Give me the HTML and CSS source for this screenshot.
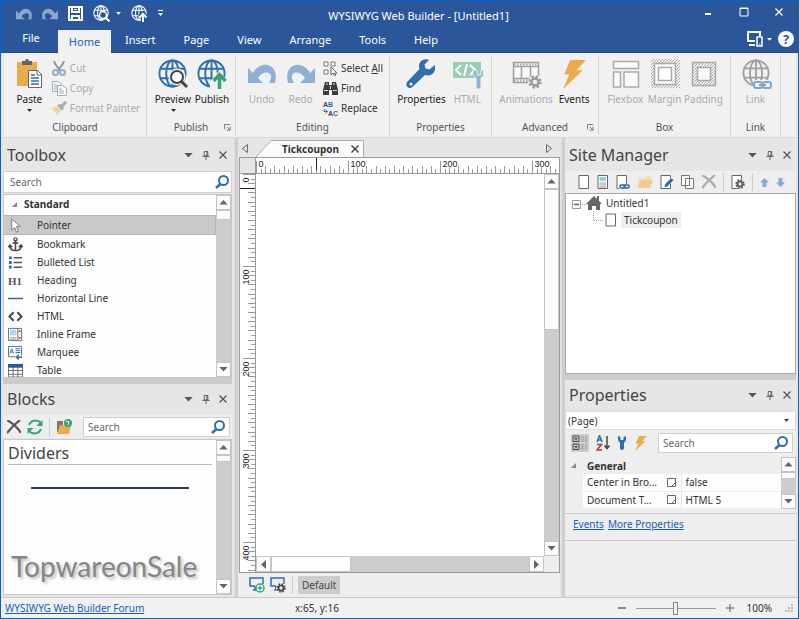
FILE: index.html
```html
<!DOCTYPE html>
<html lang="en">
<head>
    <meta charset="UTF-8">
    <meta name="viewport" content="width=device-width, initial-scale=1.0">
    <title>WYSIWYG Web Builder</title>
    <link rel="stylesheet" href="styles.css">
</head>
<body>
    <svg class="defs" aria-hidden="true">
        <pattern id="hatch" width="3" height="3" patternUnits="userSpaceOnUse">
            <path d="M0 3L3 0" stroke="#aaa"/>
        </pattern>
        <symbol id="globe" viewBox="0 0 30 30">
            <g fill="none" stroke="currentColor" stroke-width="2">
                <circle cx="15" cy="15" r="13.5"/>
                <ellipse cx="15" cy="15" rx="6.5" ry="13.5"/>
                <path d="M15 1v28M2 10h26M2 20h26"/>
            </g>
        </symbol>
        <symbol id="undo" viewBox="0 0 28 20">
            <path fill="currentColor" d="M0 4v15h15l-5-5c3-5 9-7 12-4 2 2 1 6-1 9h6c2-8 0-15-5-17-6-3-13 0-17 7z"/>
        </symbol>
        <symbol id="search" viewBox="0 0 14 14">
            <circle cx="8.5" cy="5.5" r="4.500" fill="none" stroke="#2f6fb0" stroke-width="2"/>
            <path d="M5.500 9L1 13" stroke="#2f6fb0" stroke-width="2.500"/>
        </symbol>
        <symbol id="pin" viewBox="0 0 8 10">
            <path d="M2 .5h4v5H2zM5 .5v5M0 6h8M4 6v4" fill="none" stroke="#555"/>
        </symbol>
        <symbol id="cross" viewBox="0 0 8 8">
            <path d="M.5.5l7 7M7.500.5l-7 7" stroke="currentColor" stroke-width="1.300"/>
        </symbol>
        <symbol id="bigcross" viewBox="0 0 14 14">
            <path d="M0 0c5 3 11 8 14 13M13 0C8 4 4 8 0 13" fill="none" stroke="currentColor" stroke-width="2.200"/>
        </symbol>
        <symbol id="down" viewBox="0 0 10 6"><path d="M0 0h10L5 5.500z" fill="currentColor"/></symbol>
        <symbol id="up" viewBox="0 0 10 6"><path d="M0 5.500h10L5 0z" fill="currentColor"/></symbol>
        <symbol id="launcher" viewBox="0 0 8 8">
            <path d="M.5 6V.5H7M3 3l3.500 3.500M7 3v4H3" fill="none" stroke="#666"/>
        </symbol>
        <symbol id="gear" viewBox="0 0 12 12">
            <circle cx="6" cy="6" r="4.700" fill="none" stroke="currentColor" stroke-width="2" stroke-dasharray="2 1.700"/>
            <circle cx="6" cy="6" r="3" fill="none" stroke="currentColor" stroke-width="2"/>
        </symbol>
        <symbol id="wrench" viewBox="0 0 30 30">
            <path fill="currentColor" d="M28.500 6l-5 4.500-4-1-1-4L23 1c-4-2-10 1-10 6 0 1 .3 2 .5 3L2 22c-2 2-2 4-1 5.500 2 2 4 2 6 0L19 16c6 2 12-3 9.500-10z"/>
            <circle cx="5" cy="25" r="1.500" fill="#f1f1f1"/>
        </symbol>
        <symbol id="bolt" viewBox="0 0 24 28">
            <path fill="#eaab4b" d="M8 0h15l-9 10h6L1 28l6-14H2z"/>
        </symbol>
        <symbol id="page" viewBox="0 0 12 14">
            <path d="M1 .5h9.500v13H1z" fill="#fff" stroke="#666"/>
        </symbol>
        <symbol id="monitor" viewBox="0 0 16 15">
            <path d="M6 9H1V1h13v6" fill="none" stroke="#2f6fb0" stroke-width="1.500"/>
            <path d="M4 13h4M6 9v4" stroke="#2f6fb0" stroke-width="1.500"/>
        </symbol>
    </svg>

    <div class="window">
        <header class="titlebar">
            <div class="quick">
                <button class="icon-btn dim" aria-label="Undo"><svg width="16" height="12"><use href="#undo"/></svg></button>
                <button class="icon-btn dim flip" aria-label="Redo"><svg width="16" height="12"><use href="#undo"/></svg></button>
                <button class="icon-btn" aria-label="Save">
                    <svg width="15" height="15" viewBox="0 0 15 15" fill="none" stroke="#fff" stroke-width="2"><path d="M1 1h13v13H1zM4 1v5h7V1M4 14v-4h7v4"/><path d="M6 3.500h3" stroke-width="1"/></svg>
                </button>
                <button class="icon-btn" aria-label="Preview">
                    <svg width="17" height="17" viewBox="0 0 17 17"><use href="#globe" width="16" height="16"/><circle cx="10" cy="10" r="3.500" fill="#2b579a" stroke="#fff" stroke-width="1.500"/><path d="M12.500 12.500l4 4" stroke="#fff" stroke-width="2"/></svg>
                    <svg class="caret" width="5" height="3"><use href="#down"/></svg>
                </button>
                <button class="icon-btn" aria-label="Publish">
                    <svg width="17" height="17" viewBox="0 0 17 17"><use href="#globe" width="16" height="16"/><path d="M12 17V8M8.500 12L12 8.500l3.500 3.500" fill="none" stroke="#2b579a" stroke-width="4"/><path d="M12 17V9M8.500 12.500L12 9l3.500 3.500" fill="none" stroke="#fff" stroke-width="2"/></svg>
                </button>
                <button class="icon-btn" aria-label="Customize">
                    <svg width="5" height="7" viewBox="0 0 5 7"><path d="M0 .5h5" stroke="#fff"/><path d="M0 3h5L2.500 6z" fill="#fff"/></svg>
                </button>
            </div>
            <h1 class="title">WYSIWYG Web Builder - [Untitled1]</h1>
            <div class="window-btns">
                <button class="icon-btn" aria-label="Minimize"><svg width="10" height="10"><path d="M2 7h6" stroke="#fff" stroke-width="2"/></svg></button>
                <button class="icon-btn" aria-label="Maximize"><svg width="10" height="10"><path d="M1 1h8v8H1zM1 1.500h8" fill="none" stroke="#fff"/></svg></button>
                <button class="icon-btn" aria-label="Close"><svg width="8" height="8"><use href="#cross"/></svg></button>
            </div>
        </header>

        <nav class="tabs">
            <button class="tab file">File</button>
            <button class="tab active">Home</button>
            <button class="tab">Insert</button>
            <button class="tab">Page</button>
            <button class="tab">View</button>
            <button class="tab">Arrange</button>
            <button class="tab">Tools</button>
            <button class="tab">Help</button>
            <div class="tabs-right">
                <button class="icon-btn" aria-label="Devices">
                    <svg width="17" height="16" viewBox="0 0 17 16"><path d="M8 10H1V1h12v4M2 14h6" fill="none" stroke="#fff" stroke-width="2"/><path d="M10 6h5v9h-5z" fill="#2b579a" stroke="#fff" stroke-width="1.500"/><path d="M12 13h1.500" stroke="#fff"/></svg>
                    <svg class="caret" width="5" height="3"><use href="#down"/></svg>
                </button>
                <button class="help" aria-label="Help">?</button>
            </div>
        </nav>

        <div class="ribbon">
            <section class="group clipboard">
                <div class="tools">
                    <button class="big">
                        <svg class="ico" viewBox="0 0 32 32"><path d="M4 4h20v24H4z" fill="#eaab4b"/><path d="M9 7V3h3a2 2 0 0 1 4 0h3v4z" fill="#666"/><path d="M15.500 12.500h9l4 4v13h-13z" fill="#fff" stroke="#666"/><path d="M24 12v5h5" fill="none" stroke="#666"/><path d="M18 17h4M18 20h8M18 23h8M18 26h8" stroke="#2b6cb0" stroke-width="1.500"/></svg>
                        Paste
                        <svg class="caret" width="5" height="3"><use href="#down"/></svg>
                    </button>
                    <div class="stack">
                        <button class="small" disabled><svg width="15" height="15" viewBox="0 0 15 15"><path d="M2 0c1 4 4 7 7 10M12 0c-1 4-4 7-7 10" fill="none" stroke="#999" stroke-width="2"/><circle cx="3.500" cy="11.500" r="2.500" fill="none" stroke="#8fb0d2" stroke-width="2"/><circle cx="10.500" cy="11.500" r="2.500" fill="none" stroke="#8fb0d2" stroke-width="2"/></svg>Cut</button>
                        <button class="small" disabled><svg width="15" height="15" viewBox="0 0 15 15"><path d="M.5.5h6l3 3v7h-9z" fill="#f8f8f8" stroke="#aaa"/><path d="M2 4h3M2 6h3M2 8h3" stroke="#8fb0d2"/><path d="M5.500 4.500h5l4 3v7h-9z" fill="#fff" stroke="#aaa"/><path d="M7 8h3M7 10h5M7 12h5" stroke="#8fb0d2"/></svg>Copy</button>
                        <button class="small" disabled><svg width="15" height="15" viewBox="0 0 15 15"><path d="M0 7l5-2 4 5-4 4z" fill="#f0d3a4"/><path d="M5 4l5 6 2-3-3-4z" fill="#aaa"/><path d="M9 6l5-5" stroke="#aaa" stroke-width="3"/></svg>Format Painter</button>
                    </div>
                </div>
                <h2 class="group-name">Clipboard</h2>
            </section>
            <section class="group publish">
                <div class="tools">
                    <button class="big">
                        <svg class="ico" viewBox="0 0 32 32"><g color="#2f6fb0"><use href="#globe" x="1" y="1" width="29" height="29"/></g><circle cx="20" cy="19" r="6" fill="#fff" stroke="#f1f1f1" stroke-width="5"/><circle cx="20" cy="19" r="6" fill="#fff" stroke="#444" stroke-width="2"/><path d="M24 23l6 6" stroke="#444" stroke-width="3"/></svg>
                        Preview
                        <svg class="caret" width="5" height="3"><use href="#down"/></svg>
                    </button>
                    <button class="big">
                        <svg class="ico" viewBox="0 0 32 32"><g color="#2f6fb0"><use href="#globe" x="1" y="1" width="29" height="29"/></g><path d="M14 23l9-10 9 10v9H14z" fill="#f1f1f1"/><path d="M23.500 31V18M17.500 23l6-6.500 6 6.500" fill="none" stroke="#37a376" stroke-width="3.500"/></svg>
                        Publish
                    </button>
                </div>
                <h2 class="group-name">Publish</h2>
                <button class="launch" aria-label="Publish options"><svg width="7" height="7"><use href="#launcher"/></svg></button>
            </section>
            <section class="group editing">
                <div class="tools">
                    <button class="big" disabled><svg class="ico undo" viewBox="0 0 32 32"><use href="#undo" x="2" y="6" width="28" height="20"/></svg>Undo</button>
                    <button class="big" disabled><svg class="ico undo flip" viewBox="0 0 32 32"><use href="#undo" x="2" y="6" width="28" height="20"/></svg>Redo</button>
                    <div class="stack">
                        <button class="small"><svg width="15" height="15" viewBox="0 0 15 15"><path d="M1 1h4v4H1zM8 1h4v4H8zM1 9h4v4H1z" fill="#fff" stroke="#777"/><path d="M8 6v8l2-2 1.500 3 1.500-1-1.500-2H14z" fill="#fff" stroke="#666"/></svg><span>Select <u>A</u>ll</span></button>
                        <button class="small"><svg width="15" height="15" viewBox="0 0 15 15"><path d="M2 1h4v3h3V1h4l2 8v5H9V9H6v5H0V9z" fill="#3c3c3c"/><path d="M1 9.500h4M10 9.500h4M3 3h2M10 3h2M7.500 5v3" stroke="#ddd"/></svg>Find</button>
                        <button class="small"><svg class="ab" width="15" height="15" viewBox="0 0 15 15"><text x="0" y="6" fill="#444">A<tspan fill="#2b6cb0">B</tspan></text><text x="5" y="15" fill="#444">A<tspan fill="#2b6cb0">C</tspan></text><path d="M1 8v2.500h3M2.500 8.500l2 2-2 2" fill="none" stroke="#2b6cb0"/></svg>Replace</button>
                    </div>
                </div>
                <h2 class="group-name">Editing</h2>
            </section>
            <section class="group props">
                <div class="tools">
                    <button class="big"><svg class="ico" viewBox="0 0 32 32"><g color="#2f6fb0"><use href="#wrench" x="1" y="1" width="30" height="30"/></g></svg>Properties</button>
                    <button class="big" disabled><svg class="ico" viewBox="0 0 32 32"><path d="M2 4h28v16H2z" fill="#9bccb5"/><path d="M10 7l-5 5 5 5M19 7l5 5-5 5M16 6l-3 12" fill="none" stroke="#fff" stroke-width="2"/><path d="M22 12v5l3 3v8c0 4 5 4 5 0v-8l3-3v-5h-3v5h-4v-5z" fill="#94b1d4" stroke="#f1f1f1"/></svg>HTML</button>
                </div>
                <h2 class="group-name">Properties</h2>
            </section>
            <section class="group advanced">
                <div class="tools">
                    <button class="big" disabled><svg class="ico" viewBox="0 0 32 32"><path d="M3.500 4.500h25v20h-25zM3 8.500h26M3 20.500h26M11.500 8v12M20.500 8v12" fill="#fafafa" stroke="#a0a0a0" stroke-width="1.500"/><path d="M4 6.500h24M4 22.500h24" stroke="#a0a0a0" stroke-width="2" stroke-dasharray="1.500 1.500"/><circle cx="25" cy="24" r="7" fill="#f1f1f1"/><g color="#999"><use href="#gear" x="18" y="17" width="14" height="14"/></g></svg>Animations</button>
                    <button class="big"><svg class="ico" viewBox="0 0 32 32"><use href="#bolt" x="4" y="2" width="25" height="29"/></svg>Events</button>
                </div>
                <h2 class="group-name">Advanced</h2>
                <button class="launch" aria-label="Advanced options"><svg width="7" height="7"><use href="#launcher"/></svg></button>
            </section>
            <section class="group box">
                <div class="tools">
                    <button class="big" disabled><svg class="ico" viewBox="0 0 32 32"><path d="M3.500 3.500h25v7h-25zM3.500 14h7v15h-7zM14 14h14.500v15H14z" fill="#fafafa" stroke="#aaa" stroke-width="1.500"/></svg>Flexbox</button>
                    <button class="big" disabled><svg class="ico" viewBox="0 0 32 32"><path d="M2 1h29v29H2z" fill="url(#hatch)"/><path d="M5.500 5.500h21v21h-21z" fill="#fafafa" stroke="#aaa" stroke-width="1.500"/><path d="M9.500 9.500h13v13h-13z" fill="#fff" stroke="#aaa" stroke-width="1.500"/></svg>Margin</button>
                    <button class="big" disabled><svg class="ico" viewBox="0 0 32 32"><path d="M4.500 4.500h23v23h-23z" fill="url(#hatch)" stroke="#aaa" stroke-width="1.500"/><path d="M9.500 9.500h13v13h-13z" fill="#fafafa" stroke="#aaa" stroke-width="1.500"/></svg>Padding</button>
                </div>
                <h2 class="group-name">Box</h2>
            </section>
            <section class="group link">
                <div class="tools">
                    <button class="big" disabled><svg class="ico" viewBox="0 0 32 32"><g color="#a0a0a0"><use href="#globe" x="2" y="1" width="28" height="28"/></g><path d="M13 22h19v9H13z" fill="#f1f1f1"/><rect x="14" y="24" width="8" height="6" rx="2" fill="none" stroke="#7ea6d2" stroke-width="2"/><rect x="23" y="24" width="8" height="6" rx="2" fill="none" stroke="#7ea6d2" stroke-width="2"/><path d="M19 27h7" stroke="#7ea6d2" stroke-width="2"/></svg>Link</button>
                </div>
                <h2 class="group-name">Link</h2>
            </section>
        </div>

        <main class="work">
            <aside class="side">
                <section class="panel toolbox">
                    <div class="panel-head">
                        <h2>Toolbox</h2>
                        <button class="icon-btn" aria-label="Toolbox menu"><svg width="9" height="5"><use href="#down"/></svg></button>
                        <button class="icon-btn" aria-label="Pin toolbox"><svg width="8" height="9"><use href="#pin"/></svg></button>
                        <button class="icon-btn" aria-label="Close toolbox"><svg width="8" height="8"><use href="#cross"/></svg></button>
                    </div>
                    <label class="search wide">
                        <input type="text" placeholder="Search" aria-label="Search toolbox">
                        <svg width="14" height="14"><use href="#search"/></svg>
                    </label>
                    <div class="list">
                        <div class="list-main">
                            <h3 class="cat"><svg width="5" height="5"><path d="M5 0v5H0z" fill="#888"/></svg>Standard</h3>
                            <ul class="items">
                                <li class="selected"><svg viewBox="0 0 16 16"><path d="M4 1v12l3-3 2 5 2-1-2-5h4z" fill="#fff" stroke="#777"/></svg>Pointer</li>
                                <li><svg viewBox="0 0 16 16"><path d="M8 4v11M5 6.500h6M2 9c0 4 3 5.500 6 5.500S14 13 14 9M0.500 11L2 8.500 4.500 11M11.500 11L14 8.500l1.500 2.500" fill="none" stroke="#444" stroke-width="1.600"/><circle cx="8" cy="2.500" r="1.700" fill="none" stroke="#444" stroke-width="1.300"/></svg>Bookmark</li>
                                <li><svg viewBox="0 0 16 16"><path d="M6 3h9M6 8h9M6 13h9" stroke="#555" stroke-width="1.500"/><path d="M1 3h3M1 8h3M1 13h3" stroke="#2b6cb0" stroke-width="3"/></svg>Bulleted List</li>
                                <li><span class="h1-ico">H1</span>Heading</li>
                                <li><svg viewBox="0 0 16 16"><path d="M0 8h16" stroke="#2f5f9f" stroke-width="1.500"/></svg>Horizontal Line</li>
                                <li><svg viewBox="0 0 16 16"><path d="M6 3.500L1.500 8 6 12.500M10 3.500L14.500 8 10 12.500" fill="none" stroke="#444" stroke-width="2"/></svg>HTML</li>
                                <li><svg viewBox="0 0 16 16"><path d="M.5 1.500h14v13H.5zM10.500 1v14" fill="#fff" stroke="#666"/><path d="M2 3h7v6H2z" fill="#a9d8f5"/><path d="M2 11.500h7M2 13h7" stroke="#999"/><path d="M11 5h3l-1.500-2zM11 11h3l-1.500 2z" fill="#555"/></svg>Inline Frame</li>
                                <li><svg viewBox="0 0 16 16"><path d="M.5 1.500h14v11H.5z" fill="#fff" stroke="#666"/><path d="M2 9l2-5 2 5M3 7.500h2M8 4h5M8 6h5M8 8h5" fill="none" stroke="#2b6cb0"/><path d="M8 11h8v5H8z" fill="#fff"/><path d="M9 13h6M11.500 10.500L9 13l2.500 2.500" fill="none" stroke="#2b6cb0" stroke-width="1.500"/></svg>Marquee</li>
                                <li><svg viewBox="0 0 16 16"><path d="M.5 2h15v13H.5zM.5 8h15M.5 12h15M5.500 3v12M10.500 3v12" fill="#fff" stroke="#666"/><path d="M0 1h16v4H0z" fill="#2b579a"/></svg>Table</li>
                            </ul>
                        </div>
                        <div class="scroll">
                            <button aria-label="Scroll up"><svg width="9" height="5"><use href="#up"/></svg></button>
                            <span class="thumb short"></span>
                            <button class="end" aria-label="Scroll down"><svg width="9" height="5"><use href="#down"/></svg></button>
                        </div>
                    </div>
                </section>
                <div class="hsplit"></div>
                <section class="panel blocks">
                    <div class="panel-head">
                        <h2>Blocks</h2>
                        <button class="icon-btn" aria-label="Blocks menu"><svg width="9" height="5"><use href="#down"/></svg></button>
                        <button class="icon-btn" aria-label="Pin blocks"><svg width="8" height="9"><use href="#pin"/></svg></button>
                        <button class="icon-btn" aria-label="Close blocks"><svg width="8" height="8"><use href="#cross"/></svg></button>
                    </div>
                    <div class="toolbar">
                        <button class="icon-btn" aria-label="Delete block"><svg width="14" height="14"><use href="#bigcross"/></svg></button>
                        <button class="icon-btn" aria-label="Refresh"><svg width="16" height="16" viewBox="0 0 16 16"><path d="M2 6c2-5 8-6 12-2M14 10c-2 5-8 6-12 2" fill="none" stroke="#37a376" stroke-width="2"/><path d="M15.500 1v6h-6zM.5 15V9h6z" fill="#37a376"/></svg></button>
                        <span class="bar"></span>
                        <button class="icon-btn" aria-label="Block folder"><svg width="16" height="16" viewBox="0 0 16 16"><path d="M1 2h6v11H1z" fill="#777"/><path d="M4 6h11l-2 9H1z" fill="#eaab4b"/><circle cx="12" cy="4" r="4" fill="#37a376"/><path d="M10 2l3 1-1 3" fill="none" stroke="#fff"/></svg></button>
                        <label class="search">
                            <input type="text" placeholder="Search" aria-label="Search blocks">
                            <svg width="14" height="14"><use href="#search"/></svg>
                        </label>
                    </div>
                    <div class="list">
                        <div class="list-main">
                            <h3 class="dividers">Dividers</h3>
                            <hr class="rule">
                            <p class="brand">TopwareonSale</p>
                        </div>
                        <div class="scroll">
                            <button aria-label="Scroll up"><svg width="9" height="5"><use href="#up"/></svg></button>
                            <span class="thumb tiny"></span>
                            <button class="end" aria-label="Scroll down"><svg width="9" height="5"><use href="#down"/></svg></button>
                        </div>
                    </div>
                </section>
            </aside>

            <div class="vsplit"></div>

            <section class="editor">
                <div class="doc-tabs">
                    <button class="icon-btn" aria-label="Previous tab"><svg width="6" height="9" viewBox="0 0 6 9"><path d="M5.500.5v8L.5 4.500z" fill="none" stroke="#666"/></svg></button>
                    <div class="doc-tab">
                        <svg class="slope" width="15" height="17" viewBox="0 0 15 17"><path d="M0 17L15 0v17z" fill="#fcfcfc"/><path d="M0 17L15 .5" stroke="#aaa"/></svg>
                        <span class="doc-name">Tickcoupon</span>
                        <button class="icon-btn" aria-label="Close Tickcoupon"><svg width="8" height="8"><use href="#cross"/></svg></button>
                    </div>
                    <button class="icon-btn last" aria-label="Next tab"><svg width="6" height="9" viewBox="0 0 6 9"><path d="M.5.5v8l5-4z" fill="none" stroke="#666"/></svg></button>
                </div>
                <div class="canvas">
                    <div class="corner"></div>
                    <svg class="ruler-x" id="rulerX"></svg>
                    <svg class="ruler-y" id="rulerY"></svg>
                    <div class="sheet"></div>
                    <div class="scroll sv">
                        <button aria-label="Scroll up"><svg width="9" height="5"><use href="#up"/></svg></button>
                        <span class="thumb half"></span>
                        <button class="end" aria-label="Scroll down"><svg width="9" height="5"><use href="#down"/></svg></button>
                    </div>
                    <div class="scroll sh">
                        <button aria-label="Scroll left"><svg width="5" height="9" viewBox="0 0 5 9"><path d="M5 0v9L0 4.500z" fill="#666"/></svg></button>
                        <span class="thumb"></span>
                        <button class="end" aria-label="Scroll right"><svg width="5" height="9" viewBox="0 0 5 9"><path d="M0 0v9l5-4.500z" fill="#666"/></svg></button>
                    </div>
                    <div class="grip"></div>
                </div>
                <div class="breakpoints">
                    <button class="icon-btn" aria-label="Add breakpoint"><svg width="16" height="16" viewBox="0 0 16 16"><use href="#monitor" width="16" height="15"/><circle cx="11" cy="11" r="4" fill="#fff" stroke="#37a376" stroke-width="1.500"/><path d="M8.500 11h5M11 8.500v5" stroke="#37a376" stroke-width="1.500"/></svg></button>
                    <button class="icon-btn" aria-label="Manage breakpoints"><svg width="16" height="16" viewBox="0 0 16 16"><use href="#monitor" width="16" height="15"/><circle cx="11" cy="11" r="5" fill="#eee"/><use href="#gear" x="6" y="6" width="10" height="10"/></svg></button>
                    <span class="bar"></span>
                    <button class="default">Default</button>
                </div>
            </section>

            <div class="vsplit"></div>

            <aside class="side right">
                <section class="panel site">
                    <div class="panel-head">
                        <h2>Site Manager</h2>
                        <button class="icon-btn" aria-label="Site manager menu"><svg width="9" height="5"><use href="#down"/></svg></button>
                        <button class="icon-btn" aria-label="Pin site manager"><svg width="8" height="9"><use href="#pin"/></svg></button>
                        <button class="icon-btn" aria-label="Close site manager"><svg width="8" height="8"><use href="#cross"/></svg></button>
                    </div>
                    <div class="toolbar site-tools">
                        <button class="icon-btn" aria-label="New page"><svg width="12" height="14"><use href="#page"/></svg></button>
                        <button class="icon-btn" aria-label="Page from template"><svg width="12" height="14" viewBox="0 0 12 14"><use href="#page"/><path d="M2.500 2h6.500v4H2.500z" fill="#8fcdf2"/><path d="M2.500 8h6.500M2.500 10h6.500M2.500 12h6.500" stroke="#999"/></svg></button>
                        <button class="icon-btn" aria-label="Linked page"><svg width="14" height="14" viewBox="0 0 14 14"><use href="#page" width="12" height="14"/><path d="M3 9h11v5H3z" fill="#eee"/><rect x="4" y="10" width="5" height="3" rx="1" fill="none" stroke="#2b6cb0" stroke-width="1.500"/><rect x="8" y="10" width="5" height="3" rx="1" fill="none" stroke="#2b6cb0" stroke-width="1.500"/></svg></button>
                        <button class="icon-btn" aria-label="New folder"><svg width="16" height="14" viewBox="0 0 16 14"><path d="M1 12V3h7l1-2h5v4" fill="#f3dcb8"/><path d="M4 5h12l-3 8H0z" fill="#efcb92"/></svg></button>
                        <button class="icon-btn" aria-label="Page properties"><svg width="14" height="14" viewBox="0 0 14 14"><use href="#page" width="12" height="14"/><path d="M4 12l1-3 6-6 3 2-7 7z" fill="#2b6cb0" stroke="#eee" stroke-width=".6"/></svg></button>
                        <button class="icon-btn" aria-label="Clone page"><svg width="14" height="14" viewBox="0 0 14 14"><path d="M.5.5h8v10h-8zM4.500 3.500h8v10h-8z" fill="#fff" stroke="#777"/></svg></button>
                        <button class="icon-btn pale" aria-label="Delete page"><svg width="14" height="14"><use href="#bigcross"/></svg></button>
                        <span class="bar"></span>
                        <button class="icon-btn" aria-label="Page settings"><svg width="14" height="14" viewBox="0 0 14 14"><use href="#page" width="12" height="14"/><circle cx="9" cy="9" r="5" fill="#eee"/><use href="#gear" x="4" y="4" width="10" height="10"/></svg></button>
                        <span class="bar"></span>
                        <button class="icon-btn" aria-label="Move up"><svg width="9" height="9" viewBox="0 0 9 9"><path d="M0 4.500L4.500 0 9 4.500H6.500V9h-4V4.500z" fill="#84a9d4"/></svg></button>
                        <button class="icon-btn" aria-label="Move down"><svg width="9" height="9" viewBox="0 0 9 9"><path d="M0 4.500L4.500 9 9 4.500H6.500V0h-4v4.500z" fill="#84a9d4"/></svg></button>
                    </div>
                    <ul class="tree">
                        <li>
                            <svg width="30" height="16" viewBox="0 0 30 16"><path d="M.5 5.500h8v8h-8z" fill="#fff" stroke="#999"/><path d="M2 9.500h5" stroke="#2b6cb0" stroke-width="1.500"/><path d="M10 9.500h5" stroke="#999" stroke-dasharray="1 1"/><path d="M14 9l8-8 3 3V1h2v5l3 3h-2v6h-4v-4h-4v4h-4V9z" fill="#666"/></svg>
                            <span>Untitled1</span>
                        </li>
                        <li class="child">
                            <svg width="25" height="18" viewBox="0 0 25 18"><path d="M1.500 0v9.500H12" fill="none" stroke="#999" stroke-dasharray="1 1"/><path d="M14 3h9.500v12H14z" fill="#fff" stroke="#666"/></svg>
                            <span class="node">Tickcoupon</span>
                        </li>
                    </ul>
                </section>
                <div class="hsplit"></div>
                <section class="panel properties">
                    <div class="panel-head">
                        <h2>Properties</h2>
                        <button class="icon-btn" aria-label="Properties menu"><svg width="9" height="5"><use href="#down"/></svg></button>
                        <button class="icon-btn" aria-label="Pin properties"><svg width="8" height="9"><use href="#pin"/></svg></button>
                        <button class="icon-btn" aria-label="Close properties"><svg width="8" height="8"><use href="#cross"/></svg></button>
                    </div>
                    <div class="select">
                        <select aria-label="Object"><option>(Page)</option></select>
                        <svg width="5" height="3"><use href="#down"/></svg>
                    </div>
                    <div class="toolbar prop-tools">
                        <button class="icon-btn on" aria-label="Categorized"><svg width="16" height="16" viewBox="0 0 16 16"><path d="M1 1h6v5.500H1zM1 9h6v5.500H1zM2.500 3.800h3M4 2.300v3M2.500 11.800h3M4 10.300v3" fill="none" stroke="#444"/><path d="M9 2h6M9 4h6M9 6h6M9 10h6M9 12h6M9 14h6" stroke="#999" stroke-dasharray="3 1"/></svg></button>
                        <button class="icon-btn" aria-label="Sort A to Z"><svg width="14" height="16" viewBox="0 0 14 16"><path d="M1 7l2.500-6.500L6 7M2 5h3" fill="none" stroke="#2b6cb0" stroke-width="1.500"/><path d="M1 9.500h4.500L1 15h5" fill="none" stroke="#c0392b" stroke-width="1.500"/><path d="M11 1v12M8.500 10.500l2.500 3 2.500-3" fill="none" stroke="#444" stroke-width="1.500"/></svg></button>
                        <button class="icon-btn" aria-label="Property pages"><svg width="10" height="14" viewBox="0 0 10 14"><path d="M1 0v4l2 3v5c0 2.500 4 2.500 4 0V7l2-3V0L6.500 1v3h-3V1z" fill="#2f6fb0"/></svg></button>
                        <button class="icon-btn" aria-label="Events"><svg width="14" height="15"><use href="#bolt"/></svg></button>
                        <label class="search">
                            <input type="text" placeholder="Search" aria-label="Search properties">
                            <svg width="14" height="14"><use href="#search"/></svg>
                        </label>
                    </div>
                    <div class="grid-wrap">
                        <table class="props-table">
                            <thead>
                                <tr><td class="gutter"><svg width="5" height="5"><path d="M5 0v5H0z" fill="#888"/></svg></td><th colspan="3">General</th></tr>
                            </thead>
                            <tbody>
                                <tr><td class="gutter"></td><td>Center in Bro...</td><td class="flag"><svg width="9" height="9" viewBox="0 0 9 9"><path d="M.5.5h8v8h-8zM8 5L5 8" fill="none" stroke="#666"/></svg></td><td class="value">false</td></tr>
                                <tr><td class="gutter"></td><td>Document T...</td><td class="flag"><svg width="9" height="9" viewBox="0 0 9 9"><path d="M.5.5h8v8h-8zM8 5L5 8" fill="none" stroke="#666"/></svg></td><td class="value">HTML 5</td></tr>
                            </tbody>
                        </table>
                        <div class="scroll">
                            <button aria-label="Scroll up"><svg width="9" height="5"><use href="#up"/></svg></button>
                            <span class="thumb tiny"></span>
                            <button class="end" aria-label="Scroll down"><svg width="9" height="5"><use href="#down"/></svg></button>
                        </div>
                    </div>
                    <div class="prop-links"><a href="#">Events</a><a href="#">More Properties</a></div>
                </section>
            </aside>
        </main>

        <footer class="status">
            <a href="#">WYSIWYG Web Builder Forum</a>
            <span class="coords">x:65, y:16</span>
            <div class="zoom">
                <button class="icon-btn" aria-label="Zoom out"><svg width="8" height="8"><path d="M0 4h8" stroke="#888" stroke-width="2"/></svg></button>
                <input type="range" min="0" max="200" value="100" aria-label="Zoom">
                <button class="icon-btn" aria-label="Zoom in"><svg width="8" height="8"><path d="M0 4h8M4 0v8" stroke="#888" stroke-width="1.500"/></svg></button>
                <span class="percent">100%</span>
                <svg width="8" height="8" viewBox="0 0 8 8"><path d="M6 0h2v2H6zM3 3h2v2H3zM6 3h2v2H6zM0 6h2v2H0zM3 6h2v2H3zM6 6h2v2H6z" fill="#bbb"/></svg>
            </div>
        </footer>
    </div>

    <script>
        // 100 page units take 92px on the rulers
        const SCALE = 92 / 100;

        function drawRuler(svg, vertical, cursor) {
            let length = vertical ? svg.clientHeight : svg.clientWidth;
            let out = "";
            for (let i = 0; i * 5 * SCALE < length; i++) {
                let unit = i * 5;
                let pos = Math.round(unit * SCALE) + 0.5;
                let size = unit % 100 === 0 ? 12 : (i % 2 === 0 ? 7 : 4);
                let path = vertical ? `M15 ${pos}h-${size}` : `M${pos} 15v-${size}`;
                out += `<path d="${path}" class="tick"/>`;
                if (unit % 100 === 0) {
                    out += vertical
                        ? `<text transform="translate(9 ${pos + 3}) rotate(-90)" text-anchor="end">${unit}</text>`
                        : `<text x="${pos + 2}" y="9">${unit}</text>`;
                }
            }
            let mark = vertical ? `M0 ${cursor}h15` : `M${cursor} 0v12`;
            out += `<path d="${mark}" class="mark"/>`;
            svg.innerHTML = out;
        }

        function drawRulers() {
            drawRuler(document.getElementById("rulerX"), false, 60.5);
            drawRuler(document.getElementById("rulerY"), true, 14.5);
        }

        drawRulers();
        window.addEventListener("resize", drawRulers);
    </script>
</body>
</html>
```

FILE: styles.css
```css
* {
    box-sizing: border-box;
}
body {
    margin: 0;
    height: 100vh;
    padding: 0 1px 1px 0;
    background: #dcdcdc;
    font-family: "Noto Sans", "Open Sans", sans-serif;
    font-size: 10px;
    line-height: 16px;
    color: #333;
    overflow: hidden;
}
button, input, select {
    font: inherit;
    color: inherit;
}
button {
    display: flex;
    align-items: center;
    justify-content: center;
    margin: 0;
    padding: 0;
    border: 0;
    background: none;
    cursor: pointer;
}
h1, h2, h3, p, ul {
    margin: 0;
    padding: 0;
    font-size: inherit;
    font-weight: normal;
}
ul {
    list-style: none;
}
a {
    color: #1560bd;
}
svg {
    display: block;
    flex: none;
}
.defs {
    position: absolute;
    width: 0;
    height: 0;
}
.window {
    display: flex;
    flex-direction: column;
    height: 100%;
    border: 1px solid #0a62c9;
    background: #e6e6e6;
}

/* title bar and tabs */
.titlebar {
    display: grid;
    grid-template-columns: 1fr auto 1fr;
    align-items: center;
    height: 25px;
    padding: 0 15px;
    background: #2b579a;
    color: #fff;
}
.quick {
    display: flex;
    align-items: center;
    gap: 10px;
}
.quick .icon-btn {
    gap: 6px;
}
.dim {
    color: #8ba6cc;
}
.flip {
    transform: scaleX(-1);
}
.title {
    font-size: 11px;
    padding: 5px 0 0 38px;
}
.window-btns {
    display: flex;
    justify-content: flex-end;
    align-items: center;
    gap: 26px;
    padding-bottom: 4px;
}
.tabs {
    display: flex;
    height: 27px;
    padding-right: 4px;
    background: #2b579a;
    border-bottom: 1px solid #234a86;
    color: #fff;
    font-size: 11px;
}
.tab {
    padding: 1px 14px 0;
}
.tab.file {
    width: 56px;
    padding: 0 0 3px 4px;
}
.tab.active {
    align-self: flex-end;
    width: 53px;
    height: 23px;
    margin-bottom: -1px;
    margin-left: 1px;
    background: #f1f1f1;
    color: #1c62c4;
}
.tabs-right {
    display: flex;
    align-items: center;
    gap: 6px;
    margin-left: auto;
}
.tabs-right .icon-btn {
    gap: 3px;
}
.help {
    width: 16px;
    height: 16px;
    border-radius: 8px;
    background: #fff;
    color: #2b579a;
    font-size: 13px;
    font-weight: bold;
}

/* ribbon */
.ribbon {
    display: flex;
    height: 85px;
    margin: 0 2px 0 3px;
    padding: 3px 0 2px;
    background: #f1f1f1;
    border-bottom: 1px solid #d6d6d6;
}
.group {
    position: relative;
    display: flex;
    flex-direction: column;
    justify-content: space-between;
    align-items: center;
    border-right: 1px solid #d4d4d4;
}
.clipboard { flex: 0 0 143px; }
.publish { flex: 0 0 89px; }
.editing { flex: 0 0 154px; }
.props { flex: 0 0 102px; }
.advanced { flex: 0 0 107px; }
.box { flex: 0 0 132px; }
.link { flex: 0 0 50px; }
.tools {
    display: flex;
    justify-content: center;
    padding-top: 2px;
}
.publish .tools,
.props .tools,
.advanced .tools {
    padding-left: 3px;
}
.big {
    flex-direction: column;
    justify-content: flex-start;
    min-width: 39px;
    height: 59px;
    color: #222;
}
.props .big:first-child,
.advanced .big:first-child {
    margin-right: 2px;
}
.big .ico {
    width: 32px;
    height: 32px;
    margin-bottom: 1px;
}
.big .caret {
    margin-top: 2px;
}
.big .undo {
    color: #8fb0d2;
}
.big:disabled,
.small:disabled {
    color: #aaa;
}
.stack {
    display: flex;
    flex-direction: column;
    padding-left: 3px;
}
.small {
    justify-content: flex-start;
    gap: 3px;
    height: 20px;
    white-space: nowrap;
}
.ab {
    overflow: visible;
    font-family: "Liberation Sans", sans-serif;
    font-size: 7px;
    font-weight: bold;
}
.group-name {
    color: #555;
}
.launch {
    position: absolute;
    right: 4px;
    bottom: 4px;
}

/* work area */
.work {
    display: flex;
    flex: 1;
    min-height: 0;
}
.side {
    display: flex;
    flex-direction: column;
    flex: 0 0 233px;
    min-width: 0;
    padding: 2px;
}
.side.right {
    padding-left: 0;
}
.vsplit {
    flex: 0 0 4px;
    background: #cfcfcf;
    border-left: 1px solid #dedede;
}
.hsplit {
    flex: 0 0 6px;
    background: #ccc;
}
.panel {
    display: flex;
    flex-direction: column;
    min-height: 0;
}
.toolbox { flex: 1 1 238px; }
.blocks { flex: 1 1 211px; }
.site { flex: 1 1 234px; }
.properties { flex: 1 1 215px; }
.properties {
    background: #eee;
}
.panel-head {
    display: flex;
    align-items: center;
    gap: 9px;
    flex: 0 0 31px;
    padding: 0 5px 1px 4px;
    background: #e6e6e6;
    color: #555;
}
.panel-head h2 {
    margin-right: auto;
    font-size: 16px;
    line-height: 24px;
    color: #444;
}
.search {
    display: flex;
    align-items: center;
    flex: 1;
    min-width: 0;
    height: 20px;
    padding: 0 4px;
    background: #fff;
    border: 1px solid #d0d0d0;
}
.search.wide {
    flex: 0 0 22px;
    padding: 0 2px 0 6px;
}
.search input {
    flex: 1;
    width: 0;
    min-width: 0;
    padding: 0;
    border: 0;
    outline: 0;
    background: none;
}
.search input::placeholder {
    color: #666;
    opacity: 1;
}
.list {
    display: flex;
    flex: 1;
    min-height: 0;
    margin-top: 1px;
    background: #fdfdfd;
    border: 1px solid #c8c8c8;
}
.list-main {
    flex: 1;
    overflow: hidden;
}
.cat {
    display: flex;
    align-items: center;
    gap: 7px;
    height: 20px;
    padding: 0 0 2px 8px;
    font-weight: bold;
}
.items li {
    display: flex;
    align-items: center;
    gap: 14px;
    height: 18px;
    padding-left: 4px;
}
.items li svg,
.h1-ico {
    width: 15px;
    height: 15px;
}
.items .selected {
    height: 20px;
    background: #c9c9c9;
    border: 1px solid #b4b4b4;
    border-left: 0;
}
.h1-ico {
    font-family: "Liberation Serif", serif;
    font-weight: bold;
    font-size: 11px;
    color: #555;
}
.scroll {
    display: flex;
    flex-direction: column;
    flex: 0 0 15px;
    background: #cdcdcd;
    color: #666;
}
.scroll button {
    flex: 0 0 15px;
    background: #fdfdfd;
    border: 1px solid #c4c4c4;
}
.scroll .end {
    margin-top: auto;
}
.thumb {
    background: #fdfdfd;
    border: 1px solid #c4c4c4;
}
.short { height: 10px; }
.tiny { height: 7px; }
.half { height: 141px; }
.sh {
    flex-direction: row;
}
.sh .thumb {
    width: 80px;
}
.sh .end {
    margin-top: 0;
    margin-left: auto;
}

/* panel toolbars */
.toolbar {
    display: flex;
    align-items: center;
    flex: 0 0 23px;
    gap: 6px;
    padding: 0 2px 0 4px;
    background: #eee;
    color: #555;
}
.bar {
    width: 1px;
    height: 18px;
    background: #ccc;
}
.blocks .search {
    margin-left: 5px;
}
.dividers {
    margin: 0 4px;
    padding-top: 2px;
    border-bottom: 1px solid #bbb;
    font-size: 16px;
    line-height: 22px;
    color: #444;
}
.rule {
    height: 2px;
    margin: 22px 27px 0;
    border: 0;
    background: #2c3e50;
}
.blocks .list-main {
    display: flex;
    flex-direction: column;
}
.brand {
    margin: auto 0 12px 7px;
    font-family: Lato, sans-serif;
    font-size: 28px;
    line-height: 32px;
    color: #858585;
    text-shadow: 2px 2px 3px #bbb;
}

/* editor */
.editor {
    display: flex;
    flex-direction: column;
    flex: 1;
    min-width: 0;
    padding: 0 1px;
}
.doc-tabs {
    display: flex;
    align-items: flex-end;
    height: 19px;
    padding: 0 8px 0 3px;
}
.doc-tabs > .icon-btn {
    height: 18px;
}
.doc-tabs .last {
    margin-left: auto;
}
.doc-tab {
    display: flex;
    height: 17px;
    margin-left: 8px;
}
.doc-name {
    padding: 0 7px 0 11px;
    border-top: 1px solid #aaa;
    background: #fcfcfc;
    font-weight: bold;
}
.doc-tab .icon-btn {
    width: 18px;
    background: #fcfcfc;
    border: 1px solid #aaa;
    border-width: 1px 1px 0 0;
    border-radius: 0 2px 0 0;
}
.canvas {
    display: grid;
    grid-template-columns: 16px 1fr 15px;
    grid-template-rows: 16px 1fr 16px;
    flex: 1;
    min-height: 0;
    border: 1px solid #999;
}
.corner {
    background: #e6e6e6;
    border-right: 1px solid #999;
    border-bottom: 1px solid #999;
}
.ruler-x {
    grid-column: 2 / 4;
    width: 100%;
    height: 16px;
    background: #fff;
    border-bottom: 1px solid #999;
}
.ruler-y {
    grid-row: 2 / 4;
    width: 16px;
    height: 100%;
    background: #fff;
    border-right: 1px solid #999;
}
.ruler-x text,
.ruler-y text {
    font-family: "Liberation Sans", sans-serif;
    font-size: 9px;
    fill: #222;
}
.tick {
    stroke: #999;
}
.mark {
    stroke: #222;
}
.sheet {
    background: #fff;
}
.grip {
    background: #eee;
}
.breakpoints {
    display: flex;
    align-items: center;
    gap: 5px;
    height: 24px;
    padding-left: 10px;
    background: #eee;
    color: #444;
}
.breakpoints .bar {
    margin-left: 1px;
}
.default {
    height: 18px;
    padding: 0 4px;
    background: #ccc;
}

/* right side */
.site-tools {
    flex: 0 0 22px;
    gap: 0;
    padding: 0 11px 0 13px;
    justify-content: space-between;
}
.pale {
    color: #aaa;
}
.tree {
    flex: 1;
    background: #fff;
    border: 1px solid #a8a8a8;
    padding: 0 6px;
}
.tree li {
    display: flex;
    align-items: center;
    gap: 4px;
    height: 17px;
}
.tree .child {
    padding-left: 20px;
}
.node {
    padding: 0 3px;
    background: #eee;
}
.select {
    display: flex;
    align-items: center;
    flex: 0 0 19px;
    padding: 0 6px 0 2px;
    background: #fff;
    border: 1px solid #ddd;
}
.select select {
    flex: 1;
    padding: 0;
    border: 0;
    background: none;
    appearance: none;
}
.prop-tools {
    flex: 0 0 26px;
    gap: 7px;
    padding: 0 3px 0 6px;
}
.prop-tools .on {
    width: 18px;
    height: 18px;
    background: #ccc;
}
.prop-tools .search {
    margin-left: 3px;
}
.grid-wrap {
    display: flex;
    padding: 1px 0 4px;
    border-bottom: 1px solid #c8c8c8;
}
.props-table {
    flex: 1;
    border-collapse: collapse;
}
.props-table th,
.props-table td {
    height: 17px;
    padding: 0 0 0 4px;
    line-height: 16px;
    text-align: left;
    white-space: nowrap;
}
.props-table tbody td {
    background: #fdfdfd;
    border: 1px solid #eee;
    border-width: 0 0 1px;
}
.props-table td.gutter {
    width: 18px;
    padding-left: 6px;
    background: #eee;
}
.props-table tbody td.value {
    width: 100px;
    border-left: 1px solid #e4e4e4;
}
.flag {
    width: 18px;
}
.prop-links {
    display: flex;
    gap: 4px;
    padding: 2px 8px 8px;
    border-bottom: 1px solid #c8c8c8;
}

/* status bar */
.status {
    display: grid;
    grid-template-columns: 290px 1fr auto;
    align-items: center;
    height: 21px;
    padding: 0 4px;
    background: #f1f1f1;
    border-top: 1px solid #c8c8c8;
}
.zoom {
    display: flex;
    align-items: center;
    gap: 10px;
    padding-right: 1px;
}
.zoom input {
    width: 80px;
    height: 14px;
    margin: 0;
    background: linear-gradient(#999, #999) center / 100% 1px no-repeat;
    appearance: none;
}
.zoom input::-webkit-slider-thumb {
    width: 5px;
    height: 13px;
    background: #f1f1f1;
    border: 1px solid #888;
    appearance: none;
}
.percent {
    padding: 0 3px;
}
```
